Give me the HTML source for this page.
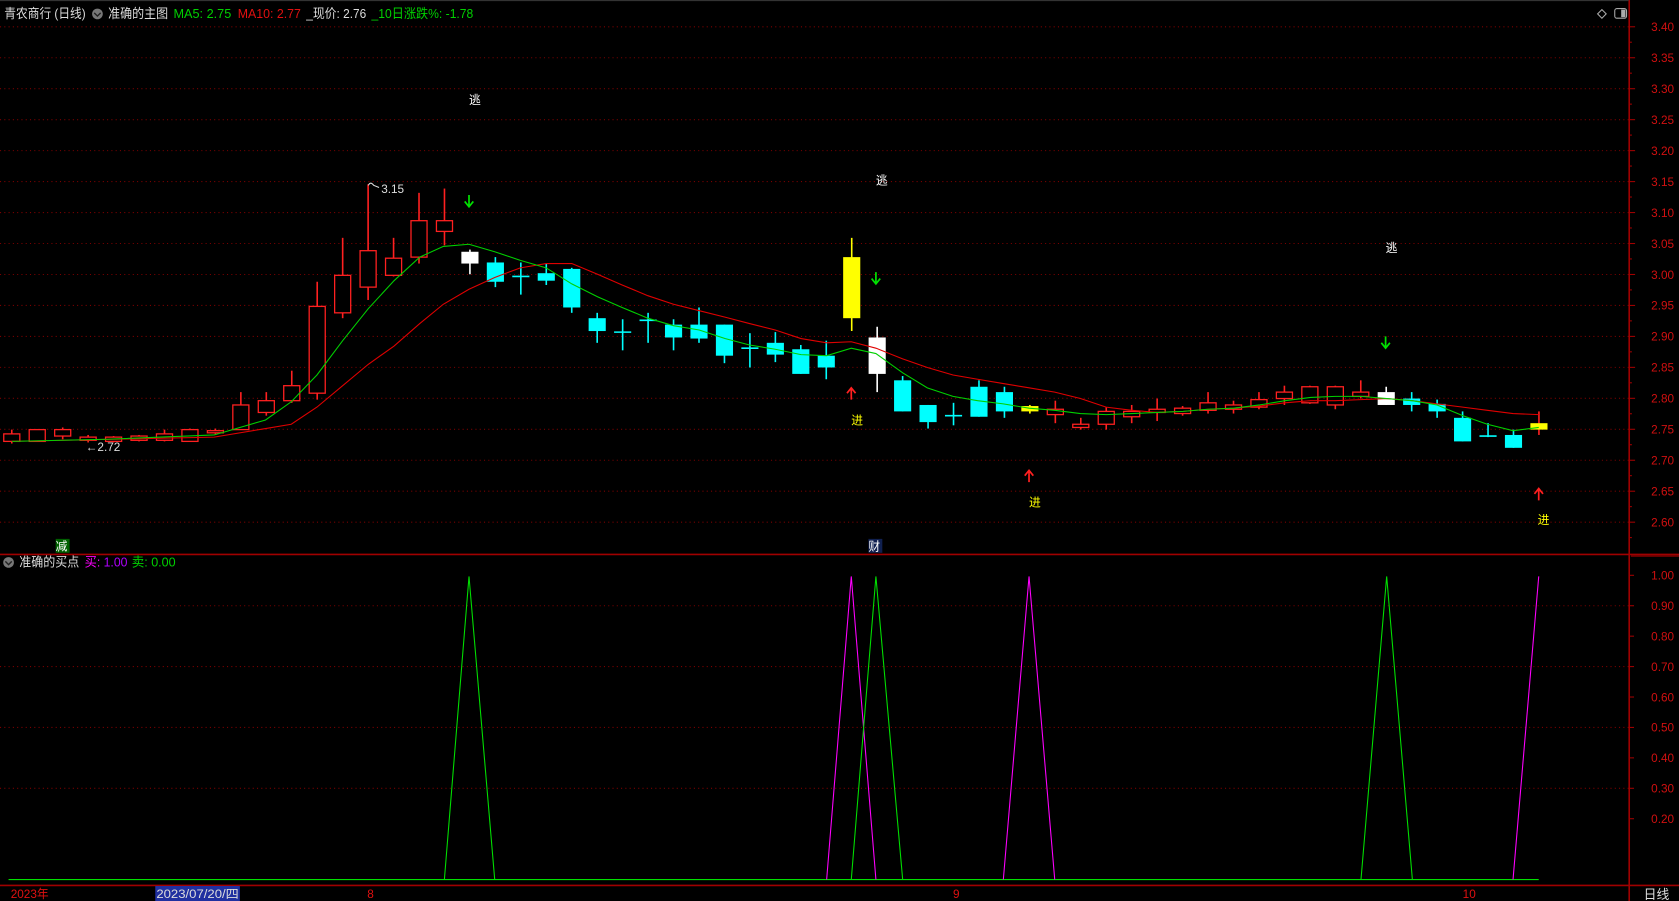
<!DOCTYPE html>
<html><head><meta charset="utf-8">
<style>
html,body{margin:0;padding:0;background:#000;overflow:hidden}
svg{display:block}
text{font-family:"Liberation Sans","Noto Sans CJK SC",sans-serif}
</style></head>
<body>
<svg id="s" width="1679" height="901" viewBox="0 0 1568 841" preserveAspectRatio="none" xmlns="http://www.w3.org/2000/svg">
<rect width="1568" height="841" fill="#000"/>
<g id="grid"></g>
<line x1="0" y1="517.5" x2="1568" y2="517.5" stroke="#a00000" stroke-width="1.5"/>
<line x1="1521.5" y1="0" x2="1521.5" y2="841" stroke="#a00000" stroke-width="1.5"/>
<line x1="0" y1="826.5" x2="1568" y2="826.5" stroke="#a00000" stroke-width="1.5"/>
<line x1="1523" y1="519" x2="1568" y2="519" stroke="#a00000"/>
<line x1="0" y1="0.5" x2="1521" y2="0.5" stroke="#333"/>
<g id="ticks"></g>
<g id="candles"></g>
<polyline id="ma10" fill="none" stroke="#e00000" stroke-width="1"/>
<polyline id="ma5" fill="none" stroke="#00d000" stroke-width="1"/>
<g id="low"></g>
<text x="4" y="17" font-size="12" fill="#ddd" textLength="76" lengthAdjust="spacingAndGlyphs">青农商行 (日线)</text>
<circle cx="91" cy="13" r="5" fill="#777"/><path d="M88 12 l3 3 l3 -3" stroke="#222" fill="none" stroke-width="1.3"/>
<text x="101" y="17" font-size="12" fill="#ddd" textLength="56" lengthAdjust="spacingAndGlyphs">准确的主图</text>
<text x="162" y="17" font-size="12" fill="#00d000" textLength="54" lengthAdjust="spacingAndGlyphs">MA5: 2.75</text>
<text x="222" y="17" font-size="12" fill="#e01010" textLength="59" lengthAdjust="spacingAndGlyphs">MA10: 2.77</text>
<text x="286" y="17" font-size="12" fill="#ddd" textLength="56" lengthAdjust="spacingAndGlyphs">_现价: 2.76</text>
<text x="347" y="17" font-size="12" fill="#00d000" textLength="95" lengthAdjust="spacingAndGlyphs">_10日涨跌%: -1.78</text>
<path d="M1492 13 l4 -4 l4 4 l-4 4z" fill="none" stroke="#aaa"/>
<rect x="1508" y="8" width="11" height="9" rx="2" fill="none" stroke="#aaa"/><rect x="1514" y="9" width="4" height="7" fill="#aaa"/>
<circle cx="8" cy="525" r="5" fill="#777"/><path d="M5 524 l3 3 l3 -3" stroke="#222" fill="none" stroke-width="1.3"/>
<text x="18" y="529" font-size="12" fill="#ddd" textLength="56" lengthAdjust="spacingAndGlyphs">准确的买点</text>
<text x="79" y="529" font-size="12" fill="#ff00ff" textLength="40" lengthAdjust="spacingAndGlyphs">买: <tspan fill="#b000ff">1.00</tspan></text>
<text x="123" y="529" font-size="12" fill="#00d000" textLength="41" lengthAdjust="spacingAndGlyphs">卖: 0.00</text>
<text x="438" y="97" font-size="11" fill="#fff">逃</text>
<text x="818" y="172" font-size="11" fill="#fff">逃</text>
<text x="1294" y="235" font-size="11" fill="#fff">逃</text>
<text x="795" y="396" font-size="11" fill="#ffff00">进</text>
<text x="961" y="473" font-size="11" fill="#ffff00">进</text>
<text x="1436" y="489" font-size="11" fill="#ffff00">进</text>
<rect x="52" y="503" width="13" height="13" fill="#006000"/><text x="52" y="514" font-size="11" fill="#fff">减</text>
<rect x="811" y="503" width="13" height="13" fill="#102050"/><text x="811" y="514" font-size="11" fill="#fff">财</text>
<text x="80" y="421" font-size="11" fill="#ddd">←2.72</text>
<path d="M344 173 q2 -4 5 0 l5 2" stroke="#ddd" fill="none"/>
<text x="356" y="180" font-size="11" fill="#ddd">3.15</text>
<text x="10" y="838" font-size="11" fill="#e01010">2023年</text>
<rect x="145" y="827" width="79" height="14" fill="#2030a0"/>
<text x="146" y="838" font-size="11" fill="#ddd" textLength="77" lengthAdjust="spacingAndGlyphs">2023/07/20/四</text>
<text x="343" y="838" font-size="11" fill="#e01010">8</text>
<text x="890" y="838" font-size="11" fill="#e01010">9</text>
<text x="1366" y="838" font-size="11" fill="#e01010">10</text>
<text x="1535" y="839" font-size="12" fill="#ddd">日线</text>
</svg>
<script>
var NS="http://www.w3.org/2000/svg";
function el(p,t,a){var e=document.createElementNS(NS,t);for(var k in a)e.setAttribute(k,a[k]);document.getElementById(p).appendChild(e);return e;}
var prices=["3.40","3.35","3.30","3.25","3.20","3.15","3.10","3.05","3.00","2.95","2.90","2.85","2.80","2.75","2.70","2.65","2.60"];
prices.forEach(function(p,i){var y=25+i*28.9;
 el("grid","line",{x1:0,y1:y,x2:1521,y2:y,stroke:"#7a0000","stroke-dasharray":"1 3"});
 el("ticks","line",{x1:1521,y1:y,x2:1527,y2:y,stroke:"#a00000"});
 el("ticks","line",{x1:1521,y1:y+14.4,x2:1524,y2:y+14.4,stroke:"#a00000"});
 var t=el("ticks","text",{x:1542,y:y+4,"font-size":"11",fill:"#d01010"});t.textContent=p;});
["1.00","0.90","0.80","0.70","0.60","0.50","0.40","0.30","0.20"].forEach(function(p,i){var y=537+i*28.4;
 if(i%2==1) el("grid","line",{x1:0,y1:y,x2:1521,y2:y,stroke:"#7a0000","stroke-dasharray":"1 3"});
 el("ticks","line",{x1:1521,y1:y,x2:1526,y2:y,stroke:"#a00000"});
 var t=el("ticks","text",{x:1542,y:y+4,"font-size":"11",fill:"#d01010"});t.textContent=p;});
var C=[["r",405,412,401,414],["r",401,412,401,412],["r",401,407,399,410],["r",408,411,406,413],["r",408,412,407,413],["r",407,411,406,412],["r",405,411,401,412],["r",401,412,400,412],["r",402,404,400,406],
["r",378,401,366,401],["r",374,385,366,388],["r",360,374,346,376],["r",286,367,263,373],["r",257,292,222,297],["r",234,268,172,280],["r",241,257,222,258],["r",206,240,180,246],["r",206,216,176,229],
["w",235,246,233,256],["c",245,263,240,268],["x",258,258,245,275],["c",255,262,246,266],["c",251,287,250,292],["c",297,309,292,320],["x",310,310,298,327],["x",299,299,292,320],["c",303,315,298,327],["c",303,316,287,320],["c",303,332,303,339],["x",325,325,311,343],["c",320,331,310,338],["c",326,349,322,349],["c",332,343,318,354],
["y",240,297,222,309],["w",315,349,305,366],["c",355,384,351,384],["c",378,394,378,400],["x",388,388,376,397],["c",361,389,355,389],["c",366,384,361,390],["y",379,384,378,386],["r",382,387,374,395],["r",396,399,390,401],["r",384,396,380,401],["r",384,389,378,395],["r",382,385,372,393],["r",381,386,379,388],["r",376,383,366,386],["r",378,382,374,386],["r",373,380,366,382],["r",366,372,360,378],["r",361,376,360,377],["r",361,378,360,382],["r",366,370,355,372],["w",366,378,361,378],["c",372,378,366,384],["c",377,384,373,390],["c",390,412,384,412],["x",407,407,395,408],["c",406,418,401,418],["y",395,401,384,406]];
C.forEach(function(c,i){var x=11+i*23.77,t=c[0];
 var col={r:"#ff2020",w:"#ffffff",c:"#00ffff",y:"#ffff00",x:"#00ffff"}[t];
 var wc=(t=="y"&&i==60)?"#ff2020":col;
 el("candles","line",{x1:x,y1:c[3],x2:x,y2:c[4],stroke:wc,"stroke-width":1.5});
 if(t=="x"){el("candles","line",{x1:x-8,y1:c[1],x2:x+8,y2:c[1],stroke:col,"stroke-width":1.5});return;}
 var h=Math.max(c[2]-c[1],2);
 if(t=="r") el("candles","rect",{x:x-7.5,y:c[1],width:15,height:h,fill:"#000",stroke:col,"stroke-width":1.2});
 else el("candles","rect",{x:x-8,y:c[1],width:16,height:h,fill:col});
});
var m5=[[11,412],[100,410],[200,406],[248,392],[272,375],[296,350],[320,318],[344,288],[368,262],[392,240],[414,230],[438,228],[462,235],[486,243],[510,250],[534,265],[558,277],[581,287],[605,297],[629,304],[653,308],[677,316],[700,322],[724,326],[748,331],[772,332],[795,325],[818,330],[843,348],[866,362],[890,370],[913,374],[937,377],[961,381],[985,383],[1009,386],[1033,387],[1057,386],[1081,385],[1105,384],[1128,382],[1152,381],[1176,378],[1200,374],[1224,371],[1247,370],[1271,370],[1295,372],[1319,374],[1342,378],[1366,388],[1389,396],[1413,402],[1437,399]];
var m10=[[11,412],[200,408],[248,400],[272,396],[296,380],[320,360],[344,340],[368,323],[392,302],[414,284],[438,270],[462,259],[486,250],[510,246],[534,246],[558,256],[581,266],[605,276],[629,284],[653,290],[677,296],[700,302],[724,308],[748,316],[772,320],[795,319],[818,325],[843,335],[866,343],[890,350],[913,354],[937,358],[961,362],[985,366],[1009,372],[1033,380],[1057,383],[1081,385],[1105,384],[1128,382],[1152,381],[1176,379],[1200,376],[1224,374],[1247,374],[1271,373],[1295,372],[1319,374],[1342,377],[1366,380],[1389,383],[1413,386],[1437,387]];
document.getElementById("ma5").setAttribute("points",m5.join(" "));
document.getElementById("ma10").setAttribute("points",m10.join(" "));
function arr(x,y,down,col){var d=down?"M"+x+" "+(y-6)+" V"+(y+4)+" M"+(x-4)+" "+y+" L"+x+" "+(y+5)+" L"+(x+4)+" "+y:"M"+x+" "+(y+6)+" V"+(y-4)+" M"+(x-4)+" "+y+" L"+x+" "+(y-5)+" L"+(x+4)+" "+y;
 el("candles","path",{d:d,stroke:col,fill:"none","stroke-width":1.6});}
arr(438,188,1,"#00e000");arr(818,260,1,"#00e000");arr(1294,320,1,"#00e000");
arr(795,367,0,"#ff2020");arr(961,444,0,"#ff2020");arr(1437,461,0,"#ff2020");
el("low","line",{x1:8,y1:821,x2:1437,y2:821,stroke:"#00e000"});
function tri(a,b,c,col){el("low","polyline",{points:a+",821 "+b+",538 "+c+",821",fill:"none",stroke:col});}
tri(415,438,462,"#00e000");tri(772,795,818,"#ff00ff");tri(795,818,843,"#00e000");tri(937,961,985,"#ff00ff");tri(1271,1295,1319,"#00e000");
el("low","polyline",{points:"1413,821 1437,538",fill:"none",stroke:"#ff00ff"});
</script>
</body></html>
